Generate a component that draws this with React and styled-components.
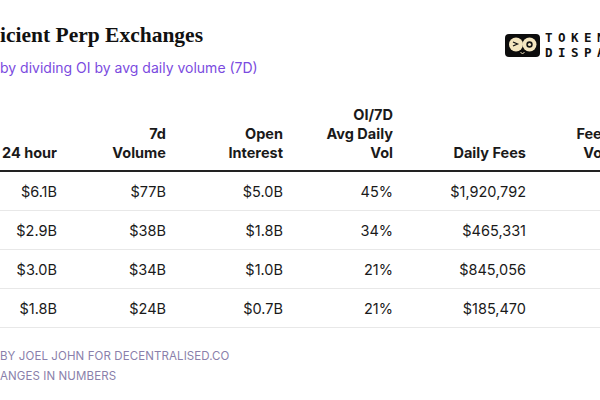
import React from "react";
import styled, { createGlobalStyle } from "styled-components";

const GlobalStyle = createGlobalStyle`
  html, body {
    margin: 0;
    padding: 0;
    background: #fff;
    overflow: hidden;
  }
  body {
    font-family: Inter, "Liberation Sans", sans-serif;
    color: #1d1d1d;
  }
`;

const Page = styled.div`
  width: 600px;
  height: 400px;
  overflow: hidden;
`;

const Top = styled.div`
  display: flex;
  align-items: flex-start;
  width: 600px;
`;

const Heading = styled.div`
  display: flex;
  flex-direction: column;
  flex: 1;
`;

const Title = styled.h1`
  margin: 22px 0 0;
  font-family: "Liberation Serif", "DejaVu Serif", serif;
  font-weight: 700;
  font-size: 21.5px;
  line-height: 26px;
  color: #111;
  white-space: nowrap;
`;

const Subtitle = styled.p`
  margin: 10px 0 0;
  font-size: 14px;
  line-height: 20px;
  color: #7b4be0;
  white-space: nowrap;
`;

const Brand = styled.div`
  display: flex;
  align-items: center;
  gap: 5px;
  margin-top: 30px;
  width: 95px;
  flex-shrink: 0;

  svg {
    flex-shrink: 0;
  }
`;

const BrandText = styled.div`
  font-family: "DejaVu Sans Mono", monospace;
  font-weight: 700;
  font-size: 12.5px;
  line-height: 15px;
  letter-spacing: 5.5px;
  color: #111;
  white-space: nowrap;
`;

const Table = styled.div`
  margin-top: 27px;
  width: 700px;
`;

const Row = styled.div`
  display: grid;
  grid-template-columns: 57px 109px 117px 110px 133px 111px 1fr;
  align-items: ${(p) => (p.$head ? "end" : "center")};
  height: ${(p) => (p.$head ? "57px" : "38px")};
  padding-bottom: ${(p) => (p.$head ? "8px" : "0")};
  border-bottom: ${(p) => (p.$head ? "2px solid #222" : "1px solid #e8e8e8")};
`;

const HeadCell = styled.div`
  text-align: right;
  font-weight: 700;
  font-size: 14.5px;
  line-height: 19px;
  color: #1a1a1a;
  white-space: nowrap;
`;

const Cell = styled.div`
  text-align: right;
  font-size: 14.5px;
  line-height: 19px;
  color: #1a1a1a;
  white-space: nowrap;
`;

const Footer = styled.div`
  margin-top: 18px;
  font-size: 11.5px;
  line-height: 20px;
  letter-spacing: 0.1px;
  text-transform: uppercase;
  color: #8a7fab;
  white-space: nowrap;
`;

const Logo = () => (
  <svg width="35" height="23" viewBox="0 0 35 23">
    <rect width="35" height="23" rx="4" fill="#0c0c0c" />
    <circle cx="11" cy="10.5" r="7" fill="#f3e5bf" />
    <path d="M8 8 L12.5 10 L8 12" stroke="#111" strokeWidth="1.3" fill="none" />
    <circle cx="24.5" cy="10.5" r="7" fill="#f3e5bf" />
    <circle cx="24.5" cy="10.5" r="3.2" fill="#111" />
    <circle cx="24.5" cy="10.5" r="1.6" fill="#f3e5bf" />
    <path d="M15.5 18.5 Q17.5 20.5 19.5 18.5" stroke="#f3e5bf" strokeWidth="1" fill="none" />
  </svg>
);

const headers = [
  ["24 hour"],
  ["7d", "Volume"],
  ["Open", "Interest"],
  ["OI/7D", "Avg Daily", "Vol"],
  ["Daily Fees"],
  ["Fees per", "Volume"],
];

const rows = [
  ["$6.1B", "$77B", "$5.0B", "45%", "$1,920,792"],
  ["$2.9B", "$38B", "$1.8B", "34%", "$465,331"],
  ["$3.0B", "$34B", "$1.0B", "21%", "$845,056"],
  ["$1.8B", "$24B", "$0.7B", "21%", "$185,470"],
];

export default function App() {
  return (
    <Page>
      <GlobalStyle />
      <Top>
        <Heading>
          <Title>icient Perp Exchanges</Title>
          <Subtitle>by dividing OI by avg daily volume (7D)</Subtitle>
        </Heading>
        <Brand>
          <Logo />
          <BrandText>
            TOKEN
            <br />
            DISPATCH
          </BrandText>
        </Brand>
      </Top>

      <Table>
        <Row $head>
          {headers.map((lines, i) => (
            <HeadCell key={i}>
              {lines.map((l, j) => (
                <div key={j}>{l}</div>
              ))}
            </HeadCell>
          ))}
        </Row>
        {rows.map((r, i) => (
          <Row key={i}>
            {r.map((v, j) => (
              <Cell key={j}>{v}</Cell>
            ))}
          </Row>
        ))}
      </Table>

      <Footer>
        <div>By Joel John for Decentralised.co</div>
        <div>anges in numbers</div>
      </Footer>
    </Page>
  );
}
